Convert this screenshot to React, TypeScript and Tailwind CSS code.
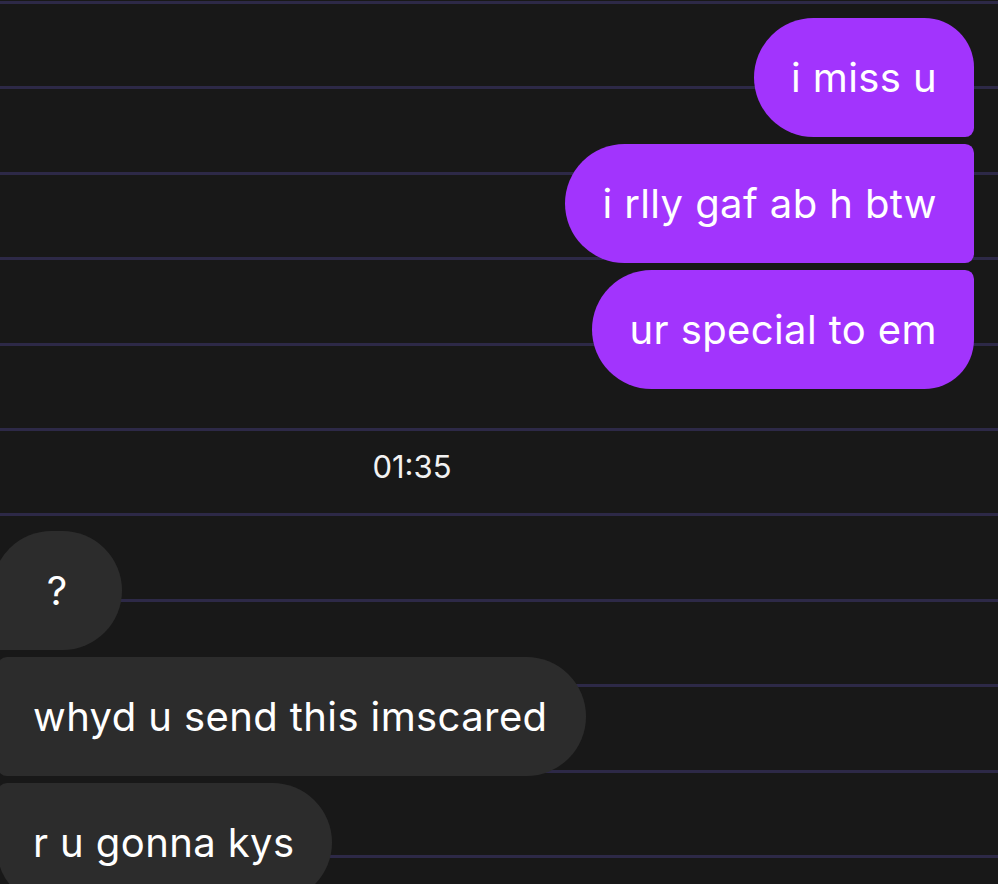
import React from "react";

type Msg = { text: string; shape: string };

const sent: Msg[] = [
  { text: "i miss u", shape: "rounded-l-[60px] rounded-tr-[50px] rounded-br-[9px]" },
  { text: "i rlly gaf ab h btw", shape: "rounded-l-[60px] rounded-r-[9px]" },
  { text: "ur special to em", shape: "rounded-l-[60px] rounded-tr-[9px] rounded-br-[50px]" },
];

export default function App() {
  return (
    <div
      className="h-[884px] w-full overflow-hidden bg-[#181818] bg-[repeating-linear-gradient(180deg,#2d2947_0px,#2d2947_3px,transparent_3px,transparent_85.4px)] bg-[position:0_1px] text-white"
      style={{ fontFamily: "Inter, 'Noto Sans', sans-serif" }}
    >
      {/* sent */}
      <div className="flex flex-col items-end gap-[7px] pt-[18px] pr-[24px]">
        {sent.map((m) => (
          <div
            key={m.text}
            className={`flex h-[119px] items-center bg-[#a234fd] pl-[37px] pr-[37px] text-[40px] leading-none tracking-[0.01em] ${m.shape}`}
          >
            {m.text}
          </div>
        ))}
      </div>

      {/* time */}
      <div className="flex h-[142px] w-[824px] items-center justify-center pt-[12px] text-[31px] leading-none text-[#f2f2f2]">
        01:35
      </div>

      {/* received */}
      <div className="flex flex-col items-start gap-[7px]">
        <div className="ml-[-8px] flex h-[119px] w-[130px] items-center justify-center rounded-t-[60px] rounded-br-[60px] rounded-bl-[9px] bg-[#2c2c2c] text-[40px] leading-none">
          ?
        </div>
        <div className="ml-[-2px] flex h-[119px] items-center rounded-l-[9px] rounded-r-[60px] bg-[#2c2c2c] pl-[35px] pr-[38px] text-[40px] leading-none tracking-[0.01em]">
          whyd u send this imscared
        </div>
        <div className="ml-[-2px] flex h-[119px] items-center rounded-tl-[9px] rounded-bl-[50px] rounded-r-[60px] bg-[#2c2c2c] pl-[35px] pr-[38px] text-[40px] leading-none tracking-[0.01em]">
          r u gonna kys
        </div>
      </div>
    </div>
  );
}
